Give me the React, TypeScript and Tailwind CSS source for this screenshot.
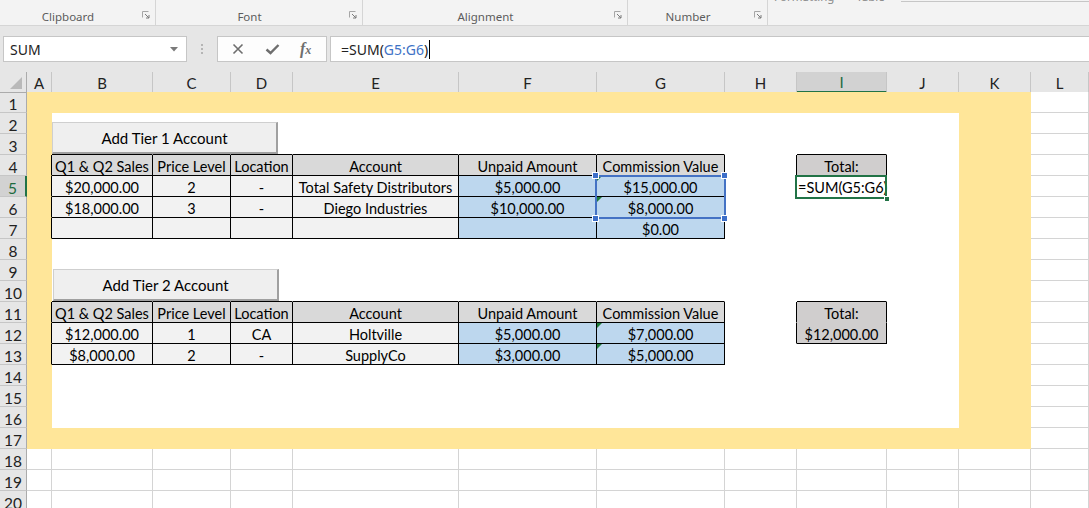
import React from 'react';

const LETTERS = ['A', 'B', 'C', 'D', 'E', 'F', 'G', 'H', 'I', 'J', 'K', 'L'];
const ROWS = Array.from({ length: 20 }, (_, i) => i + 1);

type Box = { r0: number; r1: number; c0: number; c1: number; inner: boolean };
const BOXES: Box[] = [
  { r0: 4, r1: 7, c0: 1, c1: 6, inner: true },
  { r0: 11, r1: 13, c0: 1, c1: 6, inner: true },
  { r0: 4, r1: 4, c0: 8, c1: 8, inner: true },
  { r0: 11, r1: 12, c0: 8, c1: 8, inner: false },
];

function boxAt(r: number, c: number): Box | null {
  return BOXES.find((b) => r >= b.r0 && r <= b.r1 && c >= b.c0 && c <= b.c1) ?? null;
}

type Fill = 'hdr' | 'light' | 'blue' | 'total' | 'white' | 'yellow' | 'none';

function fillOf(r: number, c: number): Fill {
  if (c === 8 && (r === 4 || r === 11 || r === 12)) return 'total';
  const inTable = (r >= 4 && r <= 7) || (r >= 11 && r <= 13);
  if (inTable && c >= 1 && c <= 6) {
    if (r === 4 || r === 11) return 'hdr';
    return c >= 5 ? 'blue' : 'light';
  }
  if (r >= 2 && r <= 16 && c >= 1 && c <= 9) return 'white';
  if (r >= 1 && r <= 17 && c >= 0 && c <= 10) return 'yellow';
  return 'none';
}

const BG: Record<Fill, string> = {
  hdr: 'bg-[#d9d9d9]',
  light: 'bg-[#f2f2f2]',
  blue: 'bg-[#bdd7ee]',
  total: 'bg-[#d0cece]',
  white: 'bg-white',
  yellow: 'bg-[#ffe699]',
  none: 'bg-white',
};

const HEAD = ['Q1 & Q2 Sales', 'Price Level', 'Location', 'Account', 'Unpaid Amount', 'Commission Value'];
const DATA: Record<number, string[]> = {
  4: HEAD,
  5: ['$20,000.00', '2', '-', 'Total Safety Distributors', '$5,000.00', '$15,000.00'],
  6: ['$18,000.00', '3', '-', 'Diego Industries', '$10,000.00', '$8,000.00'],
  7: ['', '', '', '', '', '$0.00'],
  11: HEAD,
  12: ['$12,000.00', '1', 'CA', 'Holtville', '$5,000.00', '$7,000.00'],
  13: ['$8,000.00', '2', '-', 'SupplyCo', '$3,000.00', '$5,000.00'],
};

function textOf(r: number, c: number): string {
  if (c === 8) {
    if (r === 4 || r === 11) return 'Total:';
    if (r === 12) return '$12,000.00';
    return '';
  }
  const row = DATA[r];
  if (row && c >= 1 && c <= 6) return row[c - 1];
  return '';
}

const TRIANGLES = new Set(['5-6', '6-6', '12-6', '13-6']);

function Cell({ r, c }: { r: number; c: number }) {
  const f = fillOf(r, c);
  const a = boxAt(r, c);
  const right = boxAt(r, c + 1);
  const below = boxAt(r + 1, c);
  let rc = 'border-r-transparent';
  if ((a || right) && (a !== right || (a && a.inner))) rc = 'border-r-black';
  else if (f === 'none') rc = 'border-r-[#d4d4d4]';
  let bc = 'border-b-transparent';
  if ((a || below) && (a !== below || (a && a.inner))) bc = 'border-b-black';
  else if (f === 'none') bc = 'border-b-[#d4d4d4]';
  const isActive = r === 5 && c === 8;
  const t = textOf(r, c);
  return (
    <div className={`relative h-[21px] border-r border-b ${rc} ${bc} ${BG[f]} ${isActive ? 'z-10' : ''}`}>
      {TRIANGLES.has(`${r}-${c}`) && (
        <div className="absolute left-0 top-0 h-0 w-0 border-t-[5px] border-r-[5px] border-t-[#1e7b3a] border-r-transparent" />
      )}
      {isActive ? (
        <div className="h-[20px] whitespace-nowrap pl-[1px] text-left leading-[24px] text-black">=SUM(G5:G6)</div>
      ) : (
        t && <div className="h-[20px] whitespace-nowrap text-center leading-[24px] text-black">{t}</div>
      )}
    </div>
  );
}

function Launcher() {
  return (
    <svg width="8" height="8" viewBox="0 0 8 8" className="mb-[6px] mr-[5px] self-end">
      <path d="M0.5 6.5 V0.5 H6.5" fill="none" stroke="#a6a6a6" strokeWidth="1" />
      <path d="M3 3 L7 7 M7 4 V7 H4" fill="none" stroke="#7a7a7a" strokeWidth="1" />
    </svg>
  );
}

function Group({ label, w }: { label: string; w: string }) {
  return (
    <div className={`flex h-[25px] ${w} items-end border-r border-r-[#d5d5d5]`}>
      <div className="flex-1 pr-[6px] text-center text-[11.5px] leading-[16px] text-[#5c5c5c]">{label}</div>
      <Launcher />
    </div>
  );
}

export default function App() {
  return (
    <div className="h-[508px] w-[1089px] overflow-hidden bg-[#e6e6e6] font-['Noto_Sans',sans-serif]">
      {/* Ribbon */}
      <div className="flex h-[26px] overflow-hidden border-b border-b-[#d5d5d5] bg-[#f3f3f3]">
        <Group label="Clipboard" w="w-[156px]" />
        <Group label="Font" w="w-[207px]" />
        <Group label="Alignment" w="w-[265px]" />
        <Group label="Number" w="w-[140px]" />
        <div className="flex flex-1 items-start">
          <div className="-mt-[11px] ml-[6px] text-[11.5px] leading-[16px] text-[#8a8a8a]">Formatting</div>
          <div className="-mt-[11px] ml-[22px] text-[11.5px] leading-[16px] text-[#8a8a8a]">Table</div>
          <div className="ml-auto mt-[1px] h-px w-[188px] bg-[#c6c6c6]" />
        </div>
      </div>

      {/* Formula bar */}
      <div className="mt-[10px] flex h-[26px] items-stretch">
        <div className="ml-[3px] flex w-[184px] items-center border border-[#c6c6c6] bg-white pl-[6px] pr-[8px]">
          <span className="flex-1 text-[14px] text-[#222]">SUM</span>
          <svg width="8" height="5" viewBox="0 0 8 5">
            <path d="M0 0 H8 L4 4.5 Z" fill="#7a7a7a" />
          </svg>
        </div>
        <div className="flex w-[30px] flex-col items-center justify-center gap-[2px]">
          <div className="h-[2px] w-[2px] bg-[#b5b5b5]" />
          <div className="h-[2px] w-[2px] bg-[#b5b5b5]" />
          <div className="h-[2px] w-[2px] bg-[#b5b5b5]" />
        </div>
        <div className="flex w-[110px] items-center border border-[#c6c6c6] bg-[#fdfdfd] pl-[14px]">
          <svg width="12" height="12" viewBox="0 0 12 12">
            <path d="M1.5 1.5 L10.5 10.5 M10.5 1.5 L1.5 10.5" stroke="#6e6e6e" strokeWidth="1.6" />
          </svg>
          <svg width="15" height="12" viewBox="0 0 15 12" className="ml-[21px]">
            <path d="M1.5 6.5 L5.5 10 L13.5 2" fill="none" stroke="#6e6e6e" strokeWidth="2.4" />
          </svg>
          <span className="ml-[20px] font-['Liberation_Serif',serif] text-[16px] font-bold italic leading-none text-[#6e6e6e]">
            f<span className="text-[12px]">x</span>
          </span>
        </div>
        <div className="ml-[3px] flex flex-1 items-center border border-r-0 border-[#c6c6c6] bg-white pl-[10px]">
          <span className="text-[14px] text-[#222]">
            =SUM(<span className="text-[#3e72c6]">G5:G6</span>)
          </span>
          <span className="ml-[1px] h-[19px] w-px bg-black" />
        </div>
      </div>

      {/* Sheet */}
      <div className="relative mt-[10px] bg-white font-['Lato',sans-serif] text-[14.5px]">
        {/* Column headers */}
        <div className="grid h-[20px] grid-cols-[27px_25px_101px_78px_62px_166px_138px_128px_72px_90px_72px_72px_1fr] bg-[#e6e6e6]">
          <div className="relative border-r border-b border-r-[#ababab] border-b-[#ababab]">
            <svg width="12" height="12" viewBox="0 0 12 12" className="absolute bottom-[3px] right-[4px]">
              <path d="M12 0 V12 H0 Z" fill="#b9b9b9" />
            </svg>
          </div>
          {LETTERS.map((l, i) =>
            i === 8 ? (
              <div
                key={l}
                className="flex items-center justify-center border-r border-b-2 border-r-[#c6c6c6] border-b-[#217346] bg-[#d2d2d2] pt-[1px] text-[15px] leading-[18px] text-[#1d6b40]"
              >
                {l}
              </div>
            ) : (
              <div
                key={l}
                className="flex items-center justify-center border-r border-b border-r-[#c6c6c6] border-b-[#ababab] pt-[1px] text-[15px] leading-[18px] text-[#222]"
              >
                {l}
              </div>
            )
          )}
        </div>

        {/* Rows */}
        <div className="grid auto-rows-[21px] grid-cols-[27px_25px_101px_78px_62px_166px_138px_128px_72px_90px_72px_72px_1fr]">
          {ROWS.map((r) => (
            <React.Fragment key={r}>
              {r === 5 ? (
                <div className="h-[21px] border-r-2 border-b border-r-[#217346] border-b-[#c6c6c6] bg-[#d2d2d2] text-center text-[15.5px] leading-[24px] text-[#1d6b40]">
                  {r}
                </div>
              ) : (
                <div className="h-[21px] border-r border-b border-r-[#ababab] border-b-[#c6c6c6] bg-[#e6e6e6] text-center text-[15.5px] leading-[24px] text-[#222]">
                  {r}
                </div>
              )}
              {LETTERS.map((_, c) => (
                <Cell key={c} r={r} c={c} />
              ))}
            </React.Fragment>
          ))}
        </div>

        {/* Buttons (shapes floating over the sheet) */}
        <div className="absolute left-[52px] top-[50px] flex h-[32px] w-[226px] items-center justify-center border border-r-2 border-b-2 border-[#cfcfcf] border-r-[#a0a0a0] border-b-[#a0a0a0] bg-[#efefef] pt-[2px] text-[15px] text-black">
          Add Tier 1 Account
        </div>
        <div className="absolute left-[53px] top-[197px] flex h-[32px] w-[226px] items-center justify-center border border-r-2 border-b-2 border-[#cfcfcf] border-r-[#a0a0a0] border-b-[#a0a0a0] bg-[#efefef] pt-[2px] text-[15px] text-black">
          Add Tier 2 Account
        </div>

        {/* Formula reference range G5:G6 */}
        <div className="pointer-events-none absolute left-[595px] top-[103px] z-20 h-[44px] w-[131px] border-2 border-[#4472c4]" />
        <div className="absolute left-[592px] top-[100px] z-20 h-[7px] w-[7px] border border-white bg-[#3d6fc9]" />
        <div className="absolute left-[721px] top-[100px] z-20 h-[7px] w-[7px] border border-white bg-[#3d6fc9]" />
        <div className="absolute left-[592px] top-[143px] z-20 h-[7px] w-[7px] border border-white bg-[#3d6fc9]" />
        <div className="absolute left-[721px] top-[143px] z-20 h-[7px] w-[7px] border border-white bg-[#3d6fc9]" />

        {/* Active cell I5 */}
        <div className="pointer-events-none absolute left-[795px] top-[103px] z-20 h-[24px] w-[92px] border-2 border-[#217346]" />
        <div className="absolute left-[884px] top-[124px] z-20 h-[6px] w-[6px] border border-white bg-[#217346]" />
      </div>
    </div>
  );
}
